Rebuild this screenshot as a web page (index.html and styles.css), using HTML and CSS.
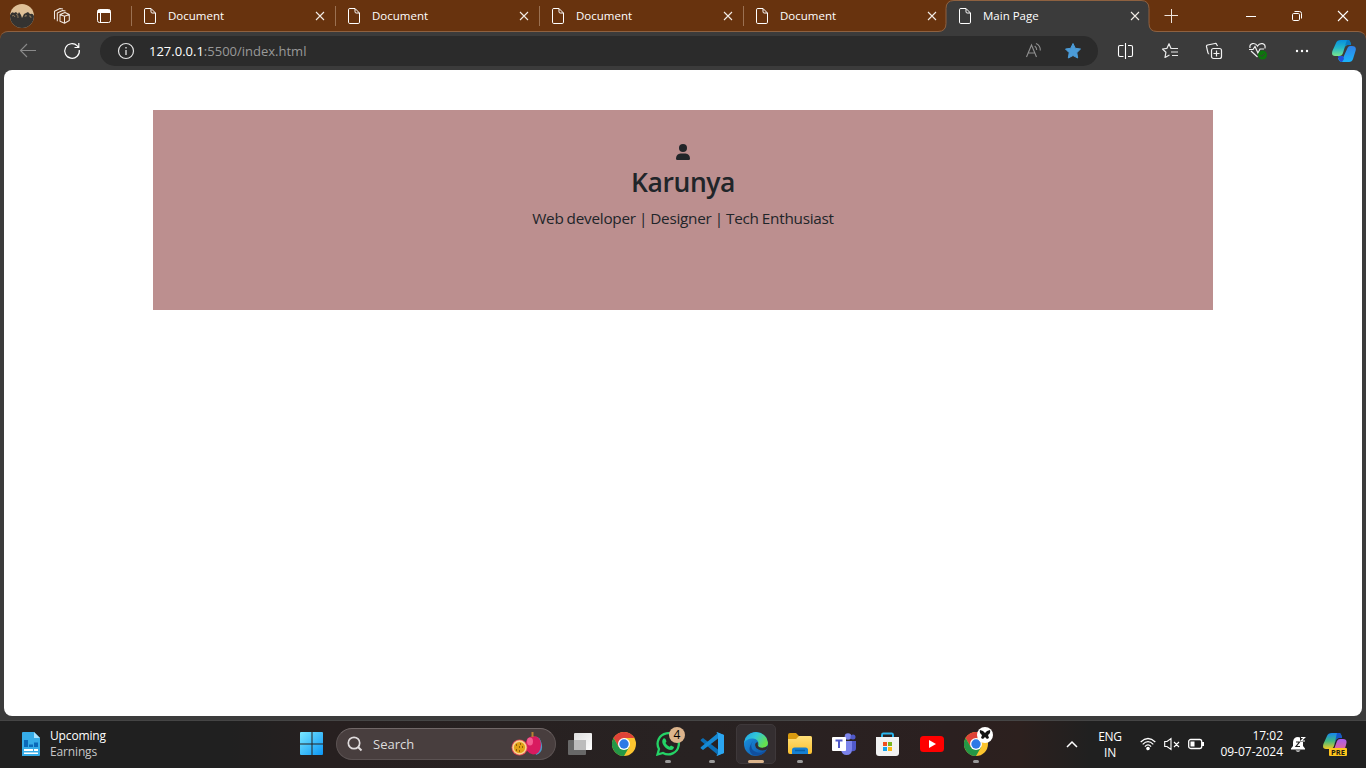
FILE: index.html
```html
<!DOCTYPE html>
<html lang="en">
<head>
<meta charset="utf-8">
<title>Main Page</title>
<link rel="stylesheet" href="styles.css">
</head>
<body>
<svg width="0" height="0" class="defs">
  <defs>
    <linearGradient id="win" x1="0" y1="0" x2="1" y2="1"><stop stop-color="#79e7ff"/><stop offset="1" stop-color="#0b96f5"/></linearGradient>
    <linearGradient id="edge1" x1="0" y1="0" x2="1" y2=".5"><stop stop-color="#1fa0e6"/><stop offset=".5" stop-color="#31c6d8"/><stop offset="1" stop-color="#66e04c"/></linearGradient>
    <linearGradient id="edge2" x1="0" y1="0" x2="1" y2="1"><stop stop-color="#1c98e5"/><stop offset="1" stop-color="#0d4fa5"/></linearGradient>
    <linearGradient id="copA" x1="0" y1="0" x2="0" y2="1"><stop stop-color="#078fde"/><stop offset=".5" stop-color="#25b7c7"/><stop offset="1" stop-color="#79e58b"/></linearGradient>
    <linearGradient id="copB" x1="0" y1="0" x2="0" y2="1"><stop stop-color="#3180e7"/><stop offset="1" stop-color="#19b4fa"/></linearGradient>
    <linearGradient id="preA" x1="0" y1="0" x2="0" y2="1"><stop stop-color="#1686ef"/><stop offset=".5" stop-color="#3fb980"/><stop offset="1" stop-color="#f2cb22"/></linearGradient>
    <linearGradient id="preB" x1="0" y1="0" x2="0" y2="1"><stop stop-color="#a65cf0"/><stop offset="1" stop-color="#f06a80"/></linearGradient>
    <linearGradient id="folder" x1="0" y1="0" x2="0" y2="1"><stop stop-color="#ffe07a"/><stop offset="1" stop-color="#fbc02e"/></linearGradient>
    <linearGradient id="plate" x1="0" y1="0" x2="1" y2="1"><stop stop-color="#ddd"/><stop offset="1" stop-color="#fff"/></linearGradient>
    <clipPath id="round"><circle cx="12" cy="12" r="12"/></clipPath>
    <symbol id="doc" viewBox="0 0 14 16"><path d="M2.500.5H8L12.500 5V14.200Q12.500 15.500 11.200 15.500H2.800Q1.500 15.500 1.500 14.200V1.800Q1.500.5 2.800.5M8 .7V3.800Q8 5 9.200 5H12.300" fill="none" stroke="#fff"/></symbol>
    <symbol id="x" viewBox="0 0 10 10"><path d="M1 1L9 9M9 1L1 9" stroke="#f3ece6" stroke-width="1.100" fill="none"/></symbol>
    <symbol id="chrome" viewBox="0 0 24 24"><circle cx="12" cy="12" r="12" fill="#fcc52f"/><path d="M12 6H22.400A12 12 0 0 0 1.600 6L6.800 15Z" fill="#df4338"/><path d="M1.600 6A12 12 0 0 0 12 24L17.200 15L12 12L6.800 15Z" fill="#249746"/><circle cx="12" cy="12" r="6" fill="#fff"/><circle cx="12" cy="12" r="4.700" fill="#2d79e6"/></symbol>
  </defs>
</svg>

<header class="tabstrip">
  <div class="cell w44"><svg width="24" height="24" viewBox="0 0 24 24"><g clip-path="url(#round)"><rect width="24" height="24" fill="#dfc198"/><path d="M0 24V11Q2 7 4 9L6 8L8 10L9 8L11 11L12 14L14 10L16 9L18 8L20 10Q23 9 24 12V24Z" fill="#343331"/><path d="M2 12Q4 10 5 13M6 11Q8 9 8 14M15 13Q15 10 17 12M19 12Q21 11 21 14" stroke="#a28a66" stroke-width=".8" fill="none"/></g></svg></div>
  <div class="cell w36"><svg width="18" height="18" viewBox="0 0 18 18" fill="none" stroke="#f0e8e2" stroke-width="1.050" stroke-linejoin="round"><path d="M7 7.500L12 5.500L16.300 7.500V13.500L11.500 16.300L7 14.300ZM7 7.500L11.500 9.300L16.300 7.500M11.500 9.300V16M4.300 14.300V6L9.500 3.500L12.500 4M1.500 12.300V4.300L7 1.500L10 2"/></svg></div>
  <div class="cell w48"><svg width="16" height="16" viewBox="0 0 16 16"><rect x="1.500" y="1.500" width="13" height="13" rx="2" fill="none" stroke="#fff"/><path d="M1.500 3.500Q1.500 1.500 4 1.500H12Q14.500 1.500 14.500 3.500V5H1.500Z" fill="#fff"/><path d="M4.500 5V14" stroke="#fff"/></svg></div>
  <div class="tabs">
    <div class="tab"><svg width="14" height="16"><use href="#doc"/></svg><span>Document</span><svg width="10" height="10"><use href="#x"/></svg></div>
    <div class="tab"><svg width="14" height="16"><use href="#doc"/></svg><span>Document</span><svg width="10" height="10"><use href="#x"/></svg></div>
    <div class="tab"><svg width="14" height="16"><use href="#doc"/></svg><span>Document</span><svg width="10" height="10"><use href="#x"/></svg></div>
    <div class="tab"><svg width="14" height="16"><use href="#doc"/></svg><span>Document</span><svg width="10" height="10"><use href="#x"/></svg></div>
    <div class="tab active"><svg class="tab-shape" width="220" height="34" viewBox="0 0 220 34"><path d="M0 34V31.500Q8 31.500 8 23.500V8.500Q8 .5 16 .5H203Q211 .5 211 8.500V23.500Q211 31.500 219 31.500V34Z" fill="#3b3b3b"/><path d="M0 31.500Q8 31.500 8 23.500V8.500Q8 .5 16 .5H203Q211 .5 211 8.500V23.500Q211 31.500 219 31.500" fill="none" stroke="#8e6140"/></svg><svg width="14" height="16"><use href="#doc"/></svg><span>Main Page</span><svg width="10" height="10"><use href="#x"/></svg></div>
  </div>
  <div class="cell plus"><svg width="14" height="14" viewBox="0 0 14 14"><path d="M7.500 0V14M.5 6.500H14" stroke="#efe5dd"/></svg></div>
  <div class="window-controls">
    <div class="cell w46"><svg width="12" height="12"><path d="M1 6.500H11" stroke="#fff"/></svg></div>
    <div class="cell w46"><svg width="12" height="12" fill="none" stroke="#fff"><rect x="1.500" y="3.500" width="7" height="7" rx="1.200"/><path d="M3.500 1.500H8.500Q10.500 1.500 10.500 3.500V8.500"/></svg></div>
    <div class="cell w46"><svg width="12" height="12"><path d="M1 1L11 11M11 1L1 11" stroke="#fff" stroke-width="1.100"/></svg></div>
  </div>
</header>

<nav class="toolbar">
  <div class="cell w44"><svg width="18" height="16" viewBox="0 0 18 16" fill="none" stroke="#8a8a8a" stroke-width="1.100"><path d="M17 7.500H1.500M8 1L1.500 7.500L8 14"/></svg></div>
  <div class="cell w44"><svg width="18" height="18" viewBox="0 0 18 18" fill="none" stroke="#fff" stroke-width="1.200"><path d="M16.300 8A7.300 7.300 0 1 1 14.300 3.900L15.500 5.500M15.800 1V5.500H11.500"/></svg></div>
  <div class="address">
    <svg class="info" width="18" height="18" fill="none" stroke="#e3e3e3"><circle cx="9" cy="9" r="7.500" stroke-width="1.200"/><path d="M9 8V13M9 5V6.500" stroke-width="1.300"/></svg>
    <p><b>127.0.0.1</b><span>:5500/index.html</span></p>
    <svg class="read" width="18" height="18" viewBox="0 0 18 18" fill="none" stroke="#909090" stroke-width="1.100"><path d="M1.500 15L6.500 3L11.500 15M3.300 11H9.700M9.700 4Q11.700 5.500 11.700 8M11 1.500Q15.500 3.500 15.300 8.500"/></svg>
    <svg class="star" width="18" height="18" viewBox="0 0 18 18"><path d="M9 1.500L11.300 6.300L16.500 7L12.800 10.700L13.700 16L9 13.500L4.300 16L5.200 10.700L1.500 7L6.700 6.300Z" fill="#4b9bd7" stroke="#4b9bd7" stroke-linejoin="round"/></svg>
  </div>
  <div class="actions">
    <div class="cell w44"><svg width="18" height="18" viewBox="0 0 18 18" fill="none" stroke="#fff" stroke-width="1.100"><path d="M8.500 1V17M6.500 3.500H3Q1.500 3.500 1.500 5V13Q1.500 14.500 3 14.500H6.500M11 3.500H14Q15.500 3.500 15.500 5V13Q15.500 14.500 14 14.500H11"/></svg></div>
    <div class="cell w44"><svg width="18" height="18" viewBox="0 0 18 18" fill="none" stroke="#e9e9e9" stroke-width="1.200" stroke-linejoin="round"><path d="M11.500 6.500H10L8 1.700L6 6.300L1.500 7L4.900 10.300L4 15.500L8.500 13M11 6.500H17M10 10H17M11 13.500H17"/></svg></div>
    <div class="cell w44"><svg width="18" height="18" viewBox="0 0 18 18" fill="none" stroke="#f1f1f1" stroke-width="1.200"><path d="M12.500 4L11.700 2.400Q11.200 1.300 10 1.500L2.600 3Q1.200 3.300 1.500 4.600L3 11Q3.200 12 4.200 12"/><rect x="6.500" y="6.500" width="10" height="10" rx="2"/><path d="M11.500 8.500V14.500M8.500 11.500H14.500"/></svg></div>
    <div class="cell w44"><svg width="20" height="20" viewBox="0 0 20 20" fill="none" stroke="#eee" stroke-width="1.200"><path d="M2 7C1 2 7 1 9.500 5C12 1 18 2 17 7.500M3 10L9.500 16M1 8.500H5L7 5.500L10 12L12 8H16"/><circle cx="14.500" cy="14" r="4.500" fill="#0d750d" stroke="none"/><path d="M12.500 14L14 15.500L16.500 12.500" stroke="#43363b" stroke-width="1"/></svg></div>
    <div class="cell w44"><svg width="16" height="16" fill="#fff"><circle cx="3" cy="8" r="1.200"/><circle cx="8" cy="8" r="1.200"/><circle cx="13" cy="8" r="1.200"/></svg></div>
    <div class="cell w40"><svg width="24" height="24" viewBox="0 0 24 24"><path d="M6 19H11L15.500 9Q16.500 7 18 7H20Q25 7 23.500 12L21 20Q20 23 17 23H10Q7 23 6 19Z" fill="url(#copB)"/><path d="M6 17H11L12 20L10 23Q7 23 6 17Z" fill="#2250d9"/><path d="M4 4Q5 1 9 1H16Q18 1 18.500 4L19 6H16Q13.500 6 12.500 9L11 14Q10 17 7 17H3Q-1 17 .4 12Z" fill="url(#copA)"/><path d="M15 1H16Q18 1 18.500 4L19 6H15Q13 6 12.500 8Z" fill="#087ac5"/></svg></div>
  </div>
</nav>

<main class="viewport">
  <section class="hero">
    <svg width="16" height="16" viewBox="0 0 16 16" fill="#212529"><circle cx="8" cy="4" r="4"/><path d="M5.500 9.500H10.500Q14.800 10 15 14.500Q15 16 13.700 16H2.300Q1 16 1 14.500Q1.200 10 5.500 9.500Z"/></svg>
    <h1>Karunya</h1>
    <p>Web developer | Designer | Tech Enthusiast</p>
  </section>
</main>

<footer class="taskbar">
  <div class="widget">
    <svg width="18" height="24" viewBox="0 0 18 24"><path d="M1 0H12L18 6V23Q18 24 17 24H0V1Q0 0 1 0Z" fill="#36ace8"/><path d="M12 0V6H18Z" fill="#a8e3ff"/><path d="M2 8H6V15H2ZM7 12.500H11V15H7ZM12 10.500H16V15H12Z" fill="#0a69b9"/><path d="M2 17H11V19H2ZM12 17H16V19H12ZM2 20.500H16V22H2Z" fill="#fff"/></svg>
    <div><p class="upcoming">Upcoming</p><p class="earnings">Earnings</p></div>
  </div>
  <div class="start"><svg width="24" height="24" viewBox="0 0 24 24"><path d="M1 0H11.500V11.500H0V1Q0 0 1 0ZM12.500 0H22Q23 0 23 1V11.500H12.500ZM0 12.500H11.500V23H1Q0 23 0 22ZM12.500 12.500H23V22Q23 23 22 23H12.500Z" fill="url(#win)"/></svg></div>
  <div class="search">
    <svg width="16" height="16" viewBox="0 0 16 16" fill="none" stroke="#e0dcdd" stroke-width="1.700"><circle cx="7" cy="7" r="5.700"/><path d="M11 11L14.500 14.500" stroke-width="2"/></svg>
    <span>Search</span>
    <svg width="32" height="26" viewBox="0 0 32 26"><path d="M21 7Q28 3 30.500 12Q33 21 25 24Z" fill="#4d98c7"/><path d="M22 5Q30 5 30 14Q29.500 23.500 22 23.500Q14.500 22 14.500 14Q14.500 6 22 5Z" fill="#d91b60"/><ellipse cx="19" cy="10.500" rx="3" ry="4" fill="#f45c91"/><path d="M20.500 1H22.500V6H20.500Z" fill="#b98132"/><circle cx="8.500" cy="16.500" r="8" fill="#de4854"/><circle cx="8.500" cy="16.500" r="7.200" fill="#f8d58f"/><circle cx="8.500" cy="16.500" r="5.600" fill="#e1a116"/><path d="M5 14h1M9 13h1M11 16h1M5 19h1M8 20h1M8 16h1" stroke="#754909" stroke-width="1.500"/></svg>
  </div>
  <div class="apps">
    <div class="app"><svg width="24" height="24"><rect y="8" width="18" height="15" rx="1" fill="#686868"/><rect x="6" y="1" width="18" height="17" rx="1" fill="url(#plate)"/><path d="M6 8H18V18H6Z" fill="#bdbdbd"/></svg></div>
    <div class="app"><svg width="24" height="24"><use href="#chrome"/></svg></div>
    <div class="app running"><svg width="24" height="24" viewBox="0 0 24 24"><path d="M1.500 22.500L3 17A10.600 10.600 0 1 1 7 21Z" fill="none" stroke="#24d366" stroke-width="2.300"/><path d="M7 7Q8 5.500 9.500 7L10.500 9.500L9.500 11Q11 14 13.500 14.800L15 13.500L18 15Q17.500 18 15 18Q11 18 8 14Q5 10 7 7Z" fill="#24d366"/></svg><span class="badge">4</span></div>
    <div class="app running"><svg width="24" height="24" viewBox="0 0 24 24"><path d="M1 7.500L3 6L18 17.500V23L1 9Q0 8 1 7.500Z" fill="#0b6eb5"/><path d="M1 16.500L3 18L18 6.500V1L1 15Q0 16 1 16.500Z" fill="#168ad4"/><path d="M17 0L24 3V21L17 24L16.500 23L18 22V2L16.500 1Z" fill="#2ba6f1"/><path d="M18 1V23L24 21V3Z" fill="#2ba6f1"/></svg></div>
    <div class="app running current"><svg width="24" height="24" viewBox="0 0 24 24"><g clip-path="url(#round)"><rect width="24" height="24" fill="url(#edge2)"/><path d="M0 11Q1 0 12 0C19 0 24 5 24 11Q24 16 18 16Q13 16 14.500 13Q15 7 9 6.500Q3 6 0 11Z" fill="url(#edge1)"/><path d="M9 9Q5 15 10 19Q16 23 22 18Q18 26 9 23Q2 18 9 9Z" fill="#104f9f"/><path d="M14 10.500Q13 13.500 15 15Q19 17 24 13.500V17Q19 19.500 14.500 17.500Q10 15 11.500 11.500Q13 9.500 14 10.500Z" fill="#342e30"/></g></svg></div>
    <div class="app running"><svg width="24" height="24" viewBox="0 0 24 24"><path d="M0 3Q0 1 2 1H8L11 4H22Q24 4 24 6V8H0Z" fill="#d99b10"/><path d="M0 7H8L11 4H22Q24 4 24 6V20Q24 22 22 22H2Q0 22 0 20Z" fill="url(#folder)"/><path d="M4 22V18Q4 15.500 6.500 15.500H17.500Q20 15.500 20 18V22Z" fill="#1580d2"/><path d="M7 18.500H17" stroke="#0860a7" stroke-width="1.500"/></svg></div>
    <div class="app"><svg width="24" height="24" viewBox="0 0 24 24"><circle cx="16" cy="4.500" r="3.300" fill="#7b83eb"/><circle cx="21" cy="5" r="2.500" fill="#5059c9"/><path d="M17 9H24V16Q24 20 19 19Z" fill="#5059c9"/><path d="M9 9H20V17Q20 23 14.500 23Q10 23 9 18Z" fill="#7b83eb"/><rect y="5" width="14" height="14" rx="1" fill="#fff"/><path d="M3.500 8.500H10.500M7 8.500V16" stroke="#5059c9" stroke-width="2"/></svg></div>
    <div class="app"><svg width="24" height="24" viewBox="0 0 24 24"><path d="M6 6V3Q6 1.500 7 1.500H16Q17 1.500 17 3V6" fill="none" stroke="#29b6ee" stroke-width="2"/><path d="M0 5H23V21Q23 24 20 24H3Q0 24 0 21Z" fill="#f2f2f2"/><path d="M7 10H11V14H7Z" fill="#f15022"/><path d="M12 10H16V14H12Z" fill="#7ab51e"/><path d="M7 15H11V19H7Z" fill="#16a2ec"/><path d="M12 15H16V19H12Z" fill="#fcb813"/></svg></div>
    <div class="app"><svg width="24" height="24" viewBox="0 0 24 24"><rect y="4" width="24" height="16" rx="3.500" fill="#f00"/><path d="M9 8L16 12L9 16Z" fill="#fff"/></svg></div>
    <div class="app running"><svg width="24" height="24"><use href="#chrome"/></svg><span class="badge profile"><svg width="12" height="12" viewBox="0 0 12 12"><path d="M1 1L4 2L6 4L8 2L11 1Q12 4 9 6L10 9L8 10L6 8L4 10L2 9L3 6Q0 4 1 1Z" fill="#111"/></svg></span></div>
  </div>
  <div class="tray">
    <svg class="chev" width="12" height="8"><path d="M1 7L6 2L11 7" stroke="#fff" stroke-width="1.500" fill="none"/></svg>
    <div class="lang">ENG<br>IN</div>
    <svg class="wifi" width="16" height="14" viewBox="0 0 16 14" fill="none" stroke="#fff" stroke-width="1.200"><path d="M.7 5Q8-2 15.300 5M2.700 7.300Q8 2 13.300 7.300M4.900 9.600Q8 6.300 11.100 9.600"/><circle cx="8" cy="11.500" r="1.200" fill="#fff"/></svg>
    <svg class="sound" width="16" height="14" viewBox="0 0 16 14" fill="none" stroke="#fff" stroke-width="1.100"><path d="M.7 4.500H3L7 1.500V12.500L3 9.500H.7ZM10 5L15 10M15 5L10 10"/></svg>
    <svg class="battery" width="17" height="12" fill="none" stroke="#fff"><rect x=".7" y="1.500" width="13" height="9" rx="2" stroke-width="1.300"/><rect x="2.500" y="3.500" width="4" height="5" fill="#fff" stroke="none"/><path d="M15 4V8" stroke-width="2"/></svg>
    <div class="clock"><p class="time">17:02</p><p class="date">09-07-2024</p></div>
    <svg class="bell" width="16" height="17" viewBox="0 0 16 17"><path d="M2 6Q2.500 1 7 1L9 1.500V6H12V10L14 12.500V13.500H0V12.500L2 10ZM4.500 14.500H9.500Q7 17 4.500 14.500" fill="#fff"/><path d="M5 6H8.500L5 10.500H9" fill="none" stroke="#202020" stroke-width="1.200"/><path d="M10 1.500H13.500L10 5H14" fill="none" stroke="#fff" stroke-width="1.200"/></svg>
    <div class="copilot"><svg width="24" height="24" viewBox="0 0 24 24"><path d="M17 7H20Q25 7 23 13L21 20H10L14 9Q15 7 17 7Z" fill="url(#preB)"/><path d="M4 4Q5 1 9 1H16Q18 1 18.500 4L19 6H16Q13.500 6 12.500 9L11 14Q10 17 7 17H3Q-1 17 .4 12Z" fill="url(#preA)"/><path d="M14 1H16Q18 1 18.500 4L19 6H16Q13.500 6 12.500 9L11 14Z" fill="#1656ca"/></svg><span>PRE</span></div>
  </div>
</footer>
</body>
</html>
```
FILE: styles.css
```css
* { box-sizing: border-box; }
body {
  margin: 0; width: 1366px; height: 768px; overflow: hidden;
  display: flex; flex-direction: column;
  background: #3b3b3b; color: #fff;
  font-family: "Open Sans", "Noto Sans", sans-serif; font-size: 12px;
}
p, h1 { margin: 0; }
svg { display: block; flex: none; }
.defs { position: absolute; }
.cell { display: flex; align-items: center; justify-content: center; flex: none; }
.w36 { width: 36px; } .w40 { width: 40px; } .w44 { width: 44px; }
.w46 { width: 46px; } .w48 { width: 48px; }

.tabstrip { display: flex; height: 31px; padding-top: 1px; background: #68330e; flex: none; z-index: 1; }
.tabs { display: flex; margin: -1px 0 0 3px; padding-top: 1px; }
.tab { position: relative; width: 204px; display: flex; align-items: center; padding: 0 10px 0 12px; }
.tab::before { content: ""; position: absolute; left: 0; top: 5px; width: 1px; height: 20px; background: #9b7152; }
.tab span { flex: 1; margin-left: 11px; font-size: 11.5px; line-height: 16px; }
.tab.active { padding: 0 11px 0 11px; }
.tab.active::before { display: none; }
.tab.active > :not(.tab-shape) { position: relative; }
.tab-shape { position: absolute; left: -9px; top: -1px; z-index: 0; }
.plus { width: 40px; }
.window-controls { display: flex; margin-left: auto; }

.toolbar { display: flex; align-items: center; height: 39px; flex: none; padding-left: 6px; background: #3b3b3b; border-top: 1px solid #8e6140; border-radius: 8px 8px 0 0; }
.toolbar::before { content: ""; position: absolute; left: 0; top: 31px; z-index: -1; width: 1366px; height: 8px; background: #68330e; }
.toolbar .cell { height: 30px; }
.address { display: flex; align-items: center; width: 998px; height: 30px; margin-left: 6px; border-radius: 15px; background: #2b2b2b; }
.info { margin-left: 17px; }
.address p { flex: 1; margin-left: 14px; font-size: 13px; line-height: 20px; color: #999; }
.address b { font-weight: 400; color: #fff; }
.star { margin: 0 16px 0 21px; }
.actions { display: flex; margin-left: 6px; }

.viewport { width: 1358px; height: 646px; margin: 0 4px 4px; padding-top: 40px; flex: none; background: #fff; border-radius: 8px; }
.hero { width: 1060px; height: 200px; margin: 0 auto; padding-top: 34px; display: flex; flex-direction: column; align-items: center; background: #bc8f8f; color: #212529; }
.hero h1 { font-size: 26.5px; font-weight: 600; line-height: 34px; margin-top: 5px; letter-spacing: -.4px; }
.hero p { font-size: 15.3px; line-height: 24px; margin-top: 7px; letter-spacing: -.25px; word-spacing: -.6px; }

.taskbar { height: 48px; flex: none; display: flex; align-items: center; padding-bottom: 1px; border-top: 1px solid #454545; background: linear-gradient(90deg, #202020 0, #202020 230px, #272020 330px, #282222 700px, #2b2020 950px, #2c201e 1020px, #202020 1090px); }
.widget { display: flex; align-items: center; width: 300px; padding-left: 22px; }
.widget div { margin-left: 10px; line-height: 16px; }
.upcoming, .earnings { letter-spacing: -.15px; }
.earnings { color: #c8c8c8; }
.start { width: 36px; }
.search { display: flex; align-items: center; width: 220px; height: 32px; padding: 0 12px 0 10px; border: 1px solid #5b5252; border-top-color: #716868; border-radius: 16px; background: #483e3e; }
.search span { flex: 1; margin-left: 10px; font-size: 13px; color: #ddd; }
.apps { display: flex; gap: 4px; margin-left: 4px; }
.app { position: relative; width: 40px; height: 40px; display: flex; align-items: center; justify-content: center; border-radius: 5px; }
.app.current { background: #342e30; border: 1px solid #3e383a; }
.running::after { content: ""; position: absolute; left: 17px; bottom: 1px; width: 6px; height: 3px; border-radius: 2px; background: #999; }
.current::after { left: 11px; bottom: 0; width: 16px; background: #dcb48c; }
.badge { position: absolute; left: 21px; top: 3px; width: 16px; height: 16px; border-radius: 50%; background: #dcb48c; color: #000; line-height: 16px; text-align: center; }
.profile { display: grid; place-items: center; background: #fff; }
.tray { display: flex; align-items: center; flex: 1; margin-left: 70px; }
.lang { width: 32px; margin-left: 16px; padding-top: 2px; text-align: center; line-height: 16px; letter-spacing: -.25px; }
.wifi { margin-left: 14px; }
.sound { margin-left: 8px; }
.battery { margin-left: 8px; }
.clock { width: 64px; margin-left: 14px; text-align: right; line-height: 16px; white-space: nowrap; display: flex; flex-direction: column; align-items: flex-end; }
.bell { margin-left: 8px; }
.copilot { position: relative; margin-left: 16px; }
.copilot span { position: absolute; left: 6px; top: 16px; width: 18px; height: 8px; border-radius: 1px; background: #ffc51d; color: #201b12; font-size: 7.5px; font-weight: 700; line-height: 8px; text-align: center; }
```
